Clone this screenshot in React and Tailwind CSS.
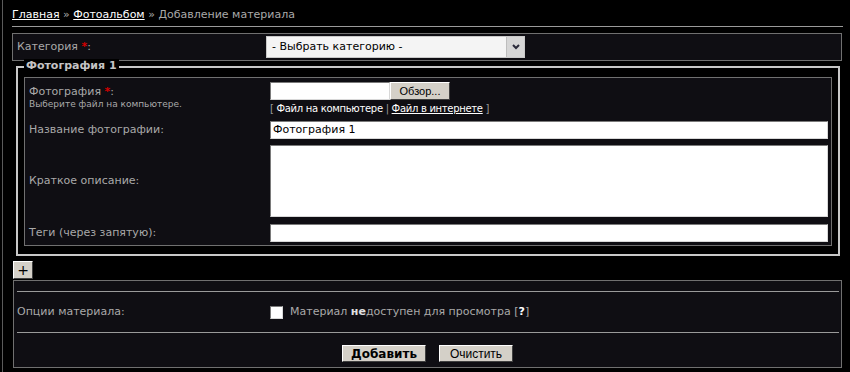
import React from "react";

const verdana = { fontFamily: '"DejaVu Sans", Verdana, sans-serif' };

function Star() {
  return <span className="text-[#d40000] font-bold">*</span>;
}

function TextBox({ value = "", className = "" }) {
  return (
    <div
      className={
        "h-[18px] bg-white border border-t-[#7a7a7a] border-l-[#7a7a7a] border-r-[#d8d8d8] border-b-[#d8d8d8] text-black text-[11px] leading-[16px] pl-[2px] " +
        className
      }
    >
      {value}
    </div>
  );
}

function Btn({ children, className = "" }) {
  return (
    <div
      className={
        "flex items-center justify-center bg-[#d4d0c8] border border-t-white border-l-white border-r-[#404040] border-b-[#404040] text-black " +
        className
      }
    >
      {children}
    </div>
  );
}

export default function App() {
  return (
    <div className="w-[850px] h-[372px] overflow-hidden bg-black pl-[2px] text-[11px] text-[#a9a9a9]" style={verdana}>
      <div className="h-full border-l border-[#5a5a5a] pl-[9px] pr-[7px]">
        {/* breadcrumb */}
        <div className="h-[27px] pt-[8px] leading-[13px] border-b border-[#9a9a9a]">
          <span className="text-white underline">Главная</span>
          <span> » </span>
          <span className="text-white underline">Фотоальбом</span>
          <span> » Добавление материала</span>
        </div>

        {/* category */}
        <div className="mt-[6px] mr-[1px] h-[28px] border border-[#707070] bg-[#0f0e13] flex items-center">
          <div className="w-[253px] pl-[4px]">
            Категория <Star />:
          </div>
          <div className="flex h-[22px] w-[259px] bg-[#f4f4f4] border border-[#c9c9c9]">
            <div className="flex-1 pl-[5px] text-black text-[11px] leading-[20px]">- Выбрать категорию -</div>
            <div className="w-[18px] bg-[#d6d6d6] border-l border-[#bdbdbd] flex items-center justify-center">
              <svg width="10" height="8" viewBox="0 0 10 8">
                <path d="M2 2 L5 5 L8 2" fill="none" stroke="#2a2a3a" strokeWidth="2" />
              </svg>
            </div>
          </div>
        </div>

        {/* photo fieldset */}
        <div className="relative mt-[5px] ml-[4px] mr-[3px] border-2 border-[#c8c8c8] pt-[9px] px-[6px] pb-[8px]">
          <div className="absolute left-[6px] top-[-9px] bg-black px-[2px] leading-[13px] font-bold text-[#c4c4c4]">
            Фотография 1
          </div>
          <div className="border border-[#707070] bg-[#0f0e13] pt-[4px] pb-[3px]">
            <div className="flex">
              <div className="w-[245px] pl-[4px] pt-[3px]">
                <div className="leading-[13px]">
                  Фотография <Star />:
                </div>
                <div className="text-[9px] leading-[12px]">Выберите файл на компьютере.</div>
              </div>
              <div>
                <div className="flex">
                  <TextBox className="w-[120px]" />
                  <Btn className="w-[60px] h-[18px] text-[11px]">
                    <span style={{ fontFamily: '"Liberation Sans", Arial, sans-serif' }}>Обзор...</span>
                  </Btn>
                </div>
                <div className="mt-[3px] text-[10px] leading-[12px] tracking-[-0.3px] text-[#9a9a9a]">
                  [ <span className="text-white">Файл на компьютере</span> |{" "}
                  <span className="text-white underline">Файл в интернете</span> ]
                </div>
              </div>
            </div>

            <div className="flex items-center mt-[6px]">
              <div className="w-[245px] pl-[4px]">Название фотографии:</div>
              <TextBox value="Фотография 1" className="w-[558px]" />
            </div>

            <div className="flex items-center mt-[6px]">
              <div className="w-[245px] pl-[4px]">Краткое описание:</div>
              <TextBox className="w-[558px] h-[72px]" />
            </div>

            <div className="flex items-center mt-[7px]">
              <div className="w-[245px] pl-[4px]">Теги (через запятую):</div>
              <TextBox className="w-[558px]" />
            </div>
          </div>
        </div>

        {/* add photo */}
        <Btn className="mt-[5px] ml-[1px] w-[20px] h-[18px] text-[14px] leading-none">+</Btn>

        {/* options */}
        <div className="mt-[1px] ml-[1px] mr-[1px] h-[88px] border border-[#707070] bg-[#0f0e13] pt-[10px]">
          <div className="ml-[3px] mr-[2px] border-t border-[#9a9a9a]" />
          <div className="h-[40px] flex items-center ml-[3px]">
            <div className="w-[253px]">Опции материала:</div>
            <div className="w-[13px] h-[13px] bg-white border border-t-[#7a7a7a] border-l-[#7a7a7a] border-r-[#d8d8d8] border-b-[#d8d8d8]" />
            <div className="ml-[7px]">
              Материал <b className="text-[#e0e0e0]">не</b>доступен для просмотра [<b className="text-white">?</b>]
            </div>
          </div>
          <div className="ml-[3px] mr-[2px] border-t border-[#9a9a9a]" />
          <div className="flex justify-center gap-[13px] pt-[12px]">
            <Btn className="w-[84px] h-[17px] text-[12px] font-bold">Добавить</Btn>
            <Btn className="w-[74px] h-[17px] text-[12px]">
              <span style={{ fontFamily: '"Liberation Sans", Arial, sans-serif' }}>Очистить</span>
            </Btn>
          </div>
        </div>
      </div>
    </div>
  );
}
